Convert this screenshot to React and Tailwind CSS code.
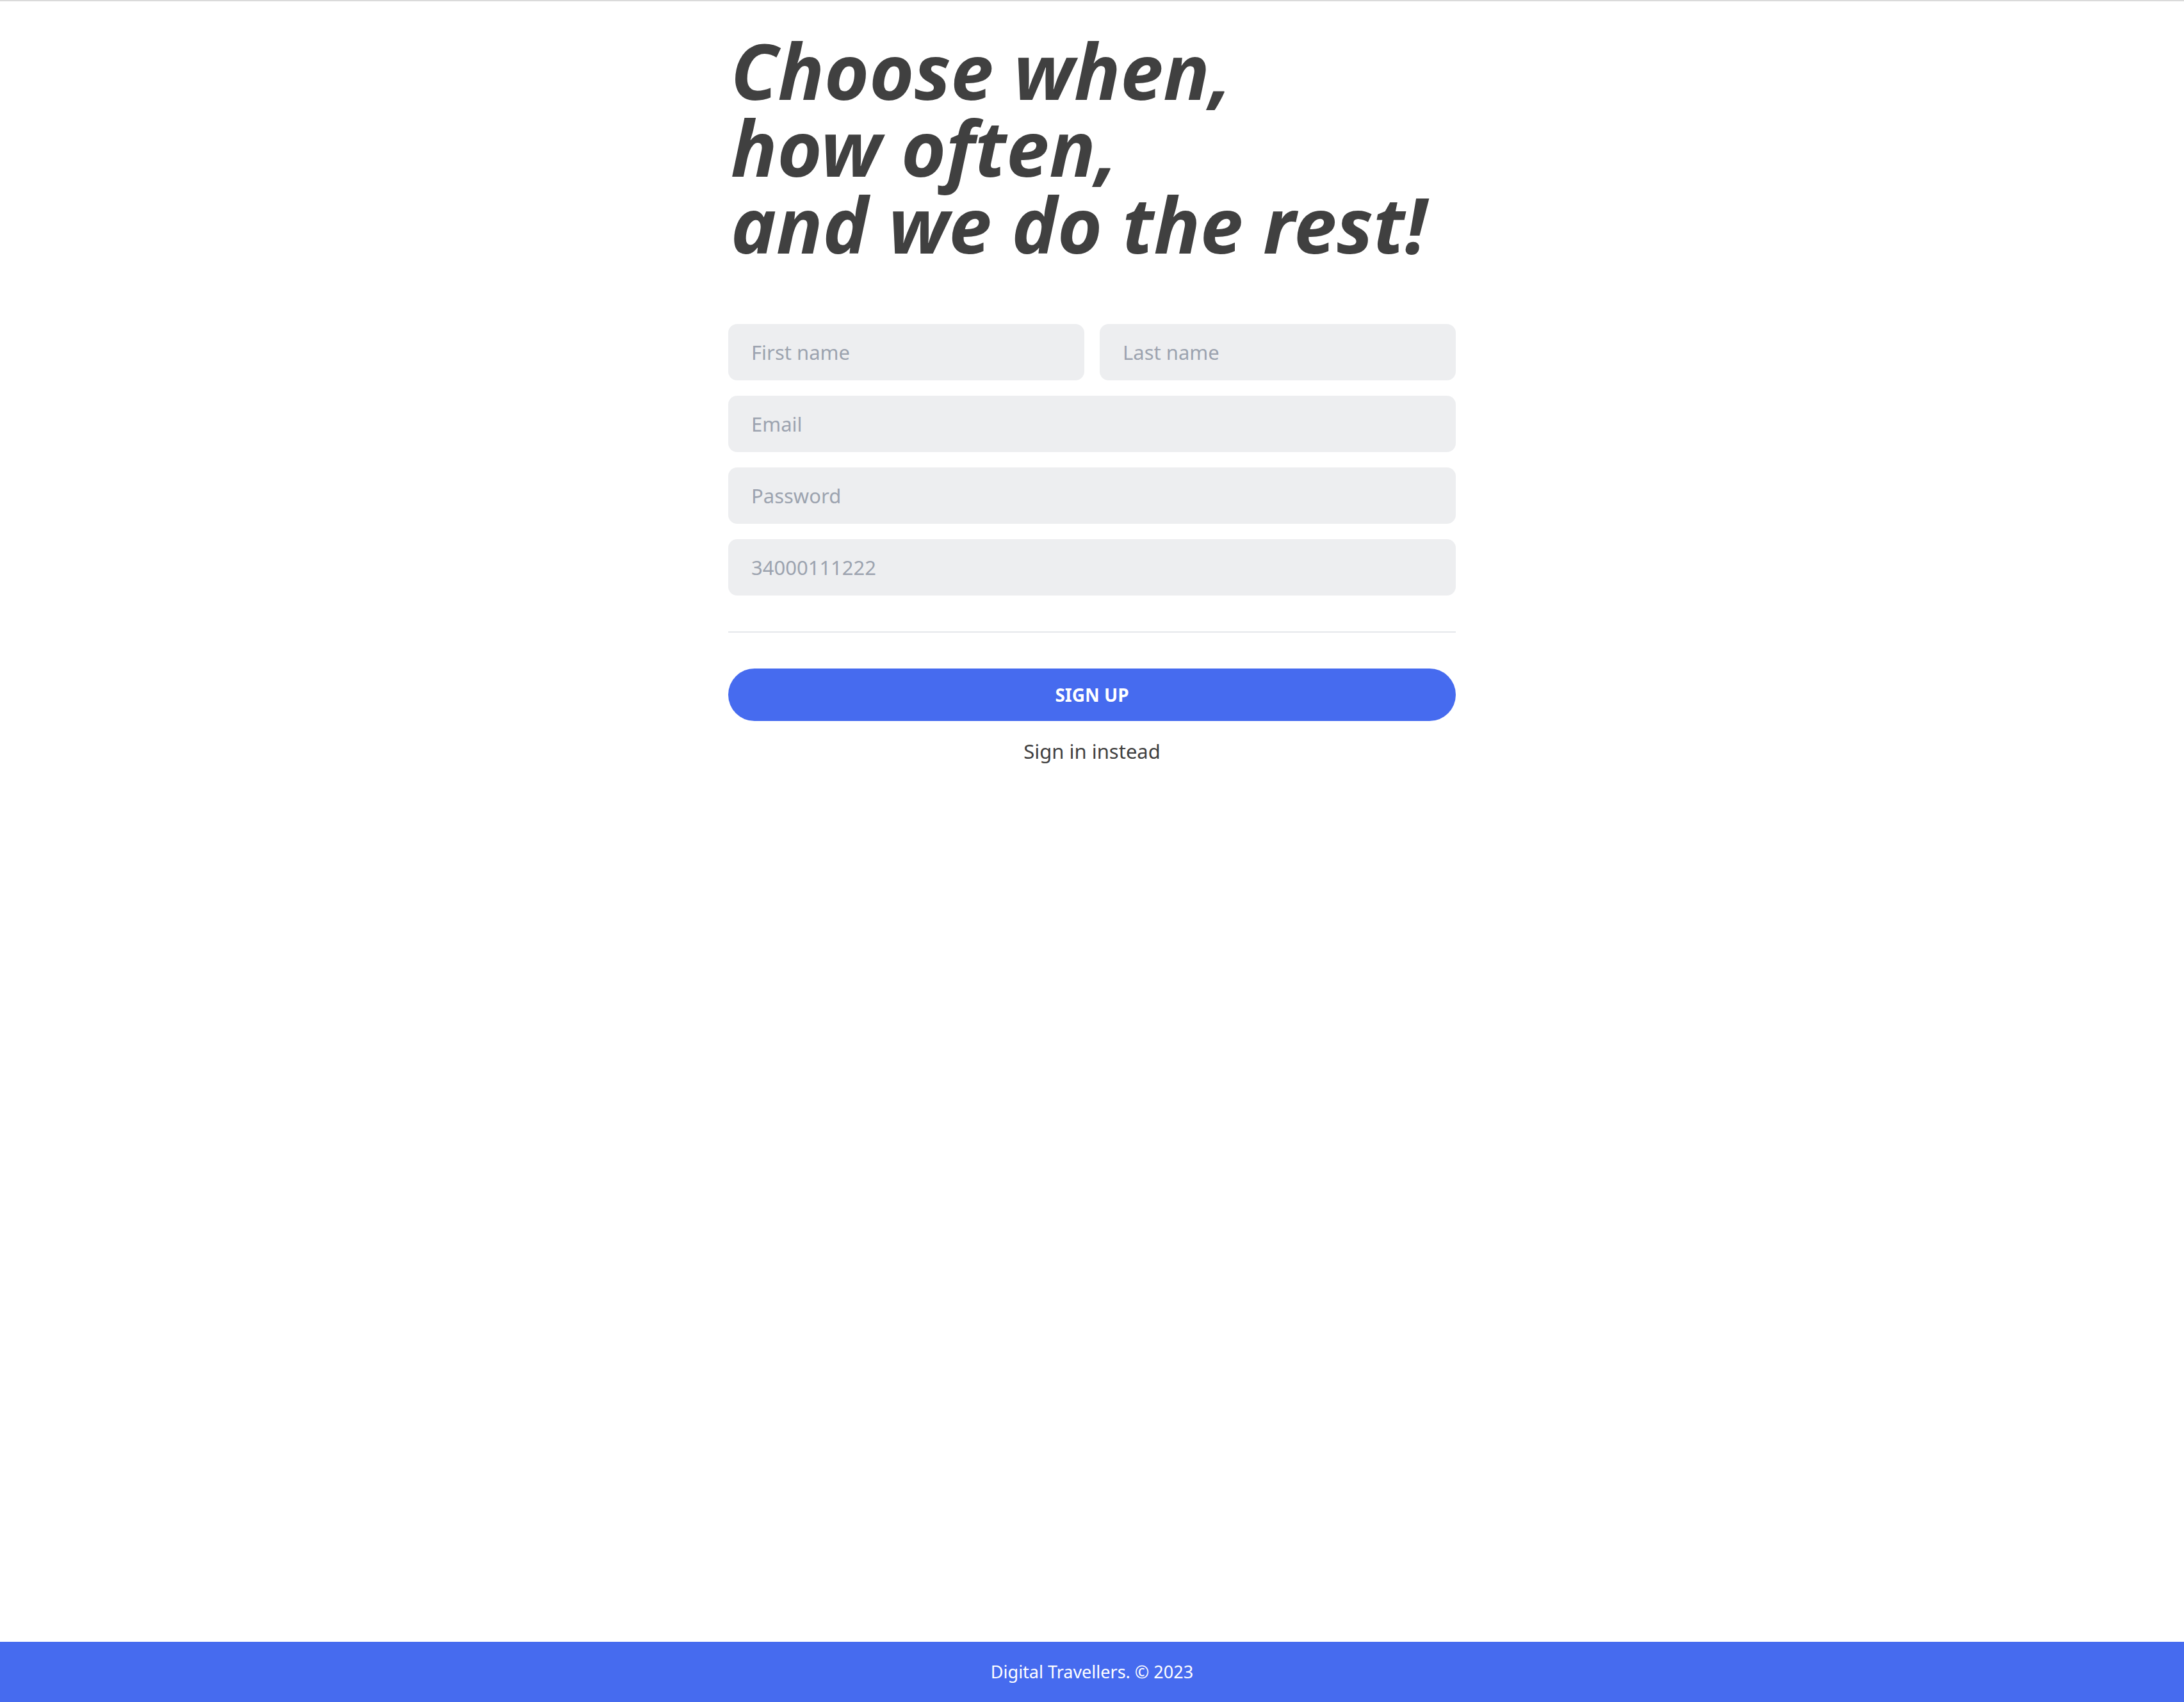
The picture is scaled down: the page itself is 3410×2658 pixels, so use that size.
import React from 'react';

const font = { fontFamily: '"Noto Sans", "Open Sans", sans-serif' };

const Field = ({ placeholder, type = 'text' }) => (
    <input
        type={type}
        placeholder={placeholder}
        className="w-full h-[88px] rounded-[14px] bg-[#edeef0] px-[36px] text-[31px] text-gray-700 placeholder:text-[#9ca3af] outline-none"
    />
);

const App = () => {
    return (
        <div className="min-h-screen flex flex-col bg-white border-t-2 border-[#dadada]" style={font}>
            <main className="flex-1 w-[1136px] mx-auto pt-[48px]">
                <h1 className="pl-1 text-[120px] leading-none font-bold italic text-[#404040]">
                    Choose when,<br />
                    how often,<br />
                    and we do the rest!
                </h1>

                {/* Form */}
                <form className="mt-[96px] flex flex-col gap-6" onSubmit={(e) => e.preventDefault()}>
                    <div className="grid grid-cols-2 gap-6">
                        <Field placeholder="First name" />
                        <Field placeholder="Last name" />
                    </div>
                    <Field placeholder="Email" type="email" />
                    <Field placeholder="Password" type="password" />
                    <Field placeholder="34000111222" type="tel" />

                    <div className="mt-8 h-[2px] bg-[#e5e7eb]" />

                    <button
                        type="submit"
                        className="mt-8 h-[82px] rounded-full bg-[#466bef] text-white text-[28px] font-bold uppercase"
                    >
                        Sign up
                    </button>
                </form>

                <p className="mt-6 text-center text-[31px] text-[#404040]">Sign in instead</p>
            </main>

            <footer className="h-[94px] bg-[#466bef] flex items-center justify-center text-white text-[27px]">
                Digital Travellers. © 2023
            </footer>
        </div>
    );
};

export default App;
